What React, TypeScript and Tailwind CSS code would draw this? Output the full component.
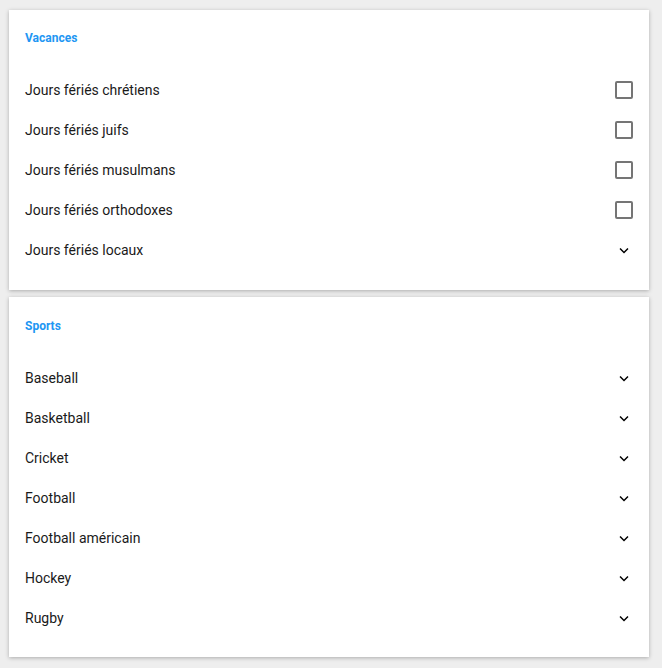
import React from "react";

const Chevron = () => (
  <svg width="19" height="19" viewBox="0 0 24 24" className="block">
    <path d="M16.59 8.59L12 13.17 7.41 8.59 6 10l6 6 6-6z" fill="#000000" />
  </svg>
);

const Checkbox = () => (
  <div className="w-[18px] h-[18px] border-2 border-[#757575] rounded-[2px]" />
);

type Item = { label: string; kind: "check" | "chevron" };

const Card = ({ title, items, extraTop = false }: { title: string; items: Item[]; extraTop?: boolean }) => (
  <div className={`bg-white shadow-[0_1px_4px_rgba(0,0,0,0.28)] px-4 ${extraTop ? "pt-[21px] pb-[19px]" : "pt-5 pb-5"}`}>
    <div className="text-[12px] leading-4 font-bold text-[#2196f3] mb-[24px]">{title}</div>
    <div className="flex flex-col">
      {items.map((it) => (
        <div key={it.label} className="h-10 flex items-center justify-between">
          <span className="text-[14px] text-[#1a1a1a]">{it.label}</span>
          <div className="w-[18px] h-[18px] flex items-center justify-center">
            {it.kind === "check" ? <Checkbox /> : <Chevron />}
          </div>
        </div>
      ))}
    </div>
  </div>
);

export default function App() {
  return (
    <div
      className="w-[662px] h-[668px] bg-[#eeeeee] pl-[9px] pr-[13px] pt-[10px] flex flex-col gap-[7px]"
      style={{ fontFamily: "Roboto, 'Noto Sans', sans-serif" }}
    >
      <Card
        title="Vacances"
        items={[
          { label: "Jours fériés chrétiens", kind: "check" },
          { label: "Jours fériés juifs", kind: "check" },
          { label: "Jours fériés musulmans", kind: "check" },
          { label: "Jours fériés orthodoxes", kind: "check" },
          { label: "Jours fériés locaux", kind: "chevron" },
        ]}
      />
      <Card
        title="Sports"
        extraTop
        items={[
          { label: "Baseball", kind: "chevron" },
          { label: "Basketball", kind: "chevron" },
          { label: "Cricket", kind: "chevron" },
          { label: "Football", kind: "chevron" },
          { label: "Football américain", kind: "chevron" },
          { label: "Hockey", kind: "chevron" },
          { label: "Rugby", kind: "chevron" },
        ]}
      />
    </div>
  );
}
